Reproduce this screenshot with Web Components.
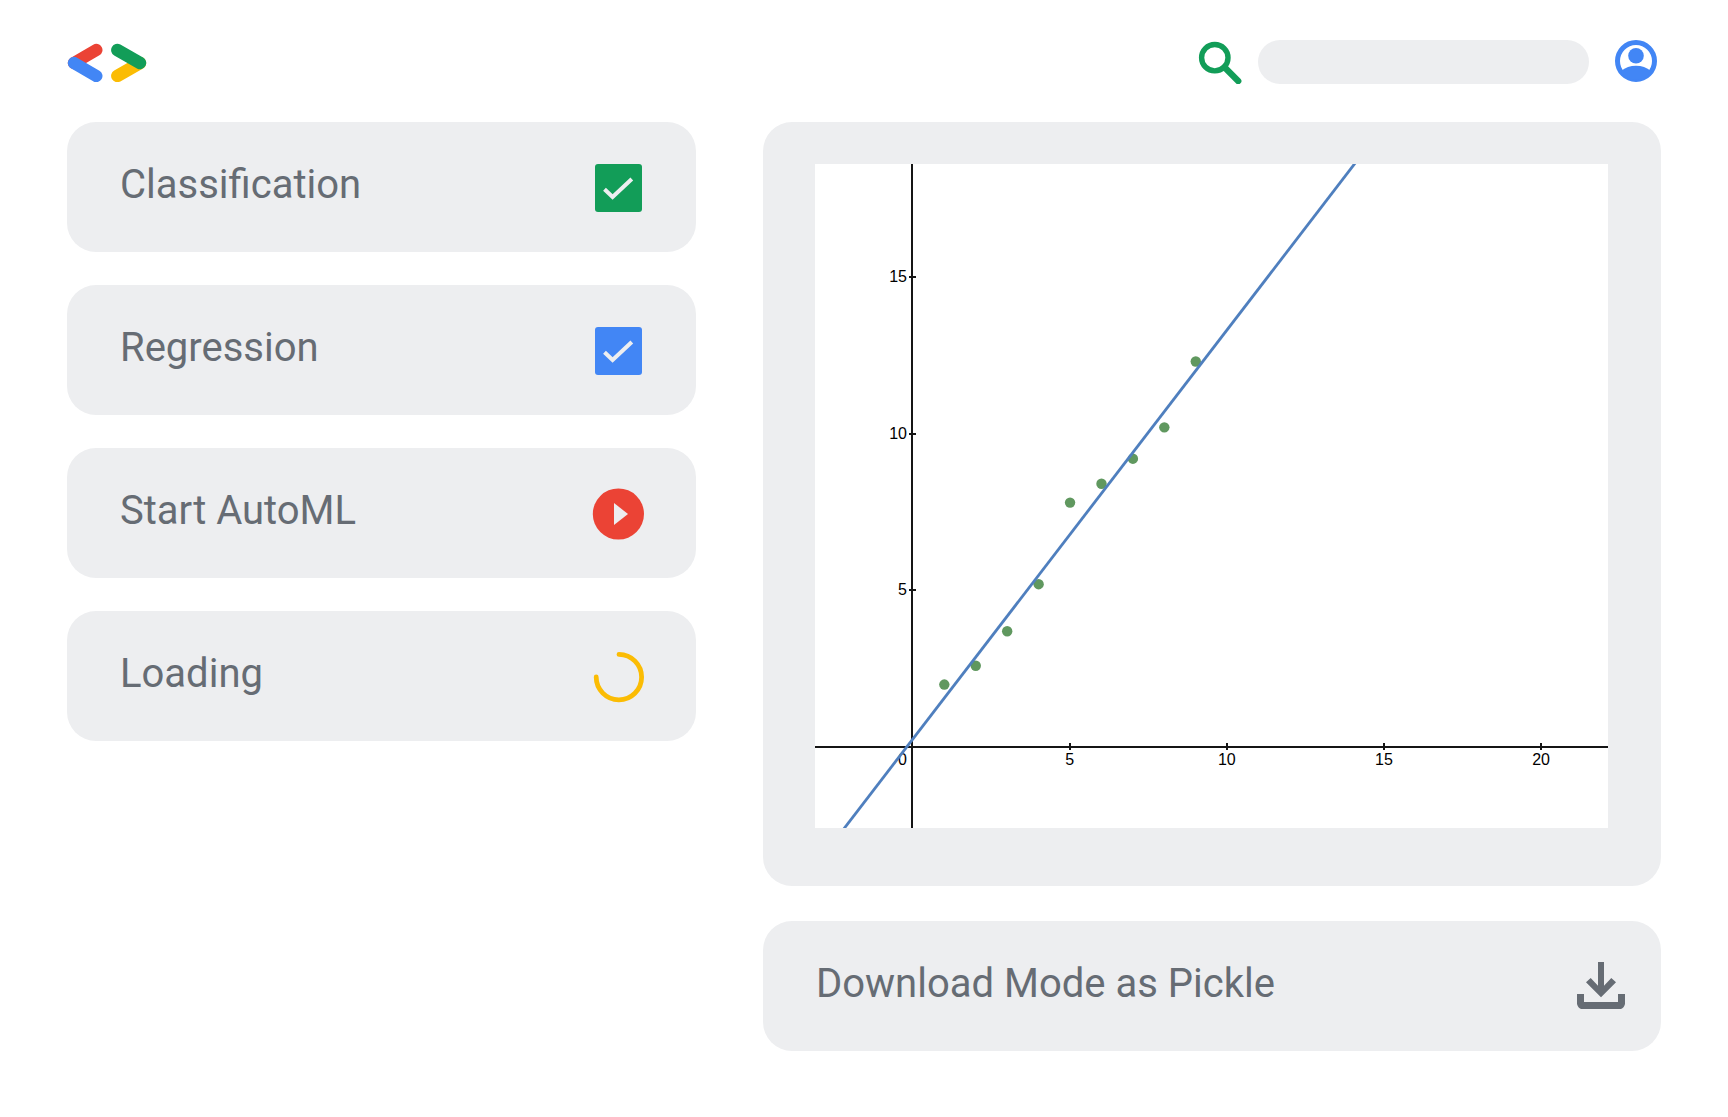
<!DOCTYPE html>
<html lang="en">
<head>
<meta charset="utf-8">
<meta name="viewport" content="width=device-width, initial-scale=1">
<title>AutoML</title>
<style>
  :root {
    --surface: #edeef0;
    --ink: #666c74;
    --blue: #4286f5;
    --red: #eb4335;
    --green: #129d58;
    --yellow: #fbbc04;
    --radius: 29px;
  }
  body { margin: 0; background: #fff; color: var(--ink); font-family: Roboto, "Liberation Sans", sans-serif; }
</style>
</head>
<body>
<automl-app></automl-app>

<script>
const define = (name, html, setup) => {
  const template = document.createElement('template');
  template.innerHTML = html;
  customElements.define(name, class extends HTMLElement {
    constructor() {
      super();
      this.attachShadow({ mode: 'open' }).append(template.content.cloneNode(true));
    }
    connectedCallback() { if (setup) setup(this, this.shadowRoot); }
  });
};

define('brand-logo', `
  <style>
    :host { display: block; }
    svg { display: block; }
    path { fill: none; stroke-width: 12.4; stroke-linecap: round; }
  </style>
  <svg width="80" height="40" viewBox="-1 -2 80 40" role="img" aria-label="Developers">
    <path d="M6 19 28.3 6" stroke="var(--red)"/>
    <path d="M6 19 28.3 32" stroke="var(--blue)"/>
    <path d="M72 19 49.3 32" stroke="var(--yellow)"/>
    <path d="M49.3 6 72 19" stroke="var(--green)"/>
  </svg>`);

define('search-field', `
  <style>
    :host { display: flex; gap: 16px; flex: 0 1 391px; min-width: 0; }
    label, svg { display: block; }
    input { flex: 1; min-width: 0; box-sizing: border-box; height: 44px; border: 0; border-radius: 22px;
      padding: 0 20px; background: var(--surface); color: inherit; font: inherit; font-size: 18px; }
  </style>
  <label for="q" aria-label="Search">
    <svg width="44" height="44" viewBox="-1 -2 44 44" fill="none" stroke="var(--green)">
      <circle cx="15.8" cy="15.7" r="13.2" stroke-width="5.4"/>
      <path d="M25.5 25.3 39.2 39" stroke-width="6.4" stroke-linecap="round"/>
    </svg>
  </label>
  <input id="q" type="search">`);

define('account-button', `
  <style>
    :host { display: block; }
    button { display: block; border: 0; padding: 0; background: none; cursor: pointer; }
    svg { display: block; }
  </style>
  <button type="button" aria-label="Account">
    <svg width="48" height="44" viewBox="-2 0 48 44" fill="var(--blue)">
      <circle cx="21" cy="21" r="18.5" fill="none" stroke="var(--blue)" stroke-width="5"/>
      <circle cx="21" cy="15.8" r="7.8"/>
      <path d="M6 31Q12.5 25.8 21 25.8T36 31L33 36Q21 44 9 36Z"/>
    </svg>
  </button>`);

define('app-header', `
  <style>
    :host { display: block; }
    header { display: flex; align-items: center; gap: 24px; }
    brand-logo { margin-right: auto; }
  </style>
  <header>
    <brand-logo></brand-logo>
    <search-field></search-field>
    <account-button></account-button>
  </header>`);

const rowStyle = `
  :host { display: block; }
  .row { box-sizing: border-box; width: 100%; display: flex; align-items: flex-start; justify-content: space-between;
    gap: 24px; margin: 0; border: 0; padding: 40px var(--row-end, 52px) 38px 53px; border-radius: var(--radius);
    background: var(--surface); color: inherit; font: inherit; font-size: 40px; line-height: 45px; text-align: left; }
  label.row, button.row { cursor: pointer; }
  .mark { display: grid; flex: none; width: 52px; height: 52px; place-items: center; }
  ::slotted(svg) { display: block; }`;

define('option-row', `
  <style>${rowStyle}
    input, svg { grid-area: 1 / 1; }
    input { appearance: none; margin: 0; width: 47px; height: 48px; border-radius: 3px; background: #fff; cursor: inherit; }
    input:checked { background: var(--accent); }
    svg { pointer-events: none; }
    input:not(:checked) + svg { visibility: hidden; }
  </style>
  <label class="row">
    <slot></slot>
    <span class="mark">
      <input type="checkbox" checked>
      <svg width="48" height="48" viewBox="0 0 48 48" fill="none" stroke="var(--surface)" stroke-width="4">
        <path d="M10.5 25.2 18.6 33 37.8 15"/>
      </svg>
    </span>
  </label>`);

define('action-row', `
  <style>${rowStyle}</style>
  <button class="row" type="button"><slot></slot><span class="mark"><slot name="icon"></slot></span></button>`);

define('status-row', `
  <style>${rowStyle}</style>
  <div class="row" role="status"><slot></slot><span class="mark"><slot name="icon"></slot></span></div>`);

define('scatter-chart', `
  <style>
    :host { display: block; background: #fff; }
    svg { display: block; width: 100%; height: auto; overflow: hidden; }
    text { font: 16px "Liberation Sans", sans-serif; fill: #000; }
    .y text { text-anchor: end; }
    .x text { text-anchor: middle; }
    .axis { stroke: #151515; stroke-width: 2; }
    .fit { stroke: #4f7fbe; stroke-width: 2.8; }
    circle { fill: #60985f; }
  </style>
  <svg viewBox="0 0 793 664" role="img" aria-label="Regression line through nine data points">
    <path class="axis" d="M0 583H793M97 0V664"/>
    <g class="x"></g><g class="y"></g><g class="points"></g>
    <path class="fit" d="M27.5 666.6 541 -2"/>
  </svg>`, (host, root) => {
  const px = x => 97.5 + x * 31.43;
  const py = y => 583.3 - y * 31.37;
  root.querySelector('.x').innerHTML = [5, 10, 15, 20].map(v =>
    `<path class="axis" d="M${Math.round(px(v))} 579V586"/><text x="${px(v)}" y="601">${v}</text>`).join('');
  root.querySelector('.y').innerHTML = '<text x="92" y="601">0</text>' + [5, 10, 15].map(v =>
    `<path class="axis" d="M94 ${Math.round(py(v))}H101"/><text x="92" y="${Math.round(py(v)) + 5}">${v}</text>`).join('');
  root.querySelector('.points').innerHTML = [2, 2.6, 3.7, 5.2, 7.8, 8.4, 9.2, 10.2, 12.3].map((y, i) =>
    `<circle cx="${px(i + 1) + .4}" cy="${py(y)}" r="5.2"/>`).join('');
});

define('chart-card', `
  <style>
    :host { display: block; padding: 42px 53px 58px 52px; border-radius: var(--radius); background: var(--surface); }
  </style>
  <slot></slot>`);

define('automl-app', `
  <style>
    :host { display: block; padding: 40px 67px; }
    main { display: grid; grid-template-columns: 629fr 898fr; gap: 67px; align-items: start; margin-top: 38px; }
    section { display: grid; gap: 33px; min-width: 0; }
    .results { gap: 35px; }
    .results action-row { --row-end: 34px; }
  </style>
  <app-header></app-header>
  <main>
    <section aria-label="Tasks">
      <option-row style="--accent: var(--green)">Classification</option-row>
      <option-row style="--accent: var(--blue)">Regression</option-row>
      <action-row>Start AutoML
        <svg slot="icon" width="52" height="52" viewBox="0 0 52 52">
          <circle cx="26.4" cy="26" r="25.6" fill="var(--red)"/>
          <path d="M22 15 36 26 22 37Z" fill="var(--surface)"/>
        </svg>
      </action-row>
      <status-row>Loading
        <svg slot="icon" width="52" height="52" viewBox="0 0 52 52" fill="none" stroke="var(--yellow)" stroke-width="4.8" stroke-linecap="round">
          <path d="M27 3.4A22.7 22.7 0 1 1 4.2 26"/>
        </svg>
      </status-row>
    </section>
    <section class="results" aria-label="Results">
      <chart-card><scatter-chart></scatter-chart></chart-card>
      <action-row>Download Mode as Pickle
        <svg slot="icon" width="52" height="52" viewBox="-2 -1 52 52" fill="var(--ink)">
          <path d="M21 0H27V23.7L34.3 16 39 20.3 24 35.3 9 20.3 13.7 16 21 23.7Z"/>
          <path d="M0 32H7V40H41V32H48V42Q47 46 44 47H4Q1 46 0 42Z"/>
        </svg>
      </action-row>
    </section>
  </main>`);
</script>
</body>
</html>
